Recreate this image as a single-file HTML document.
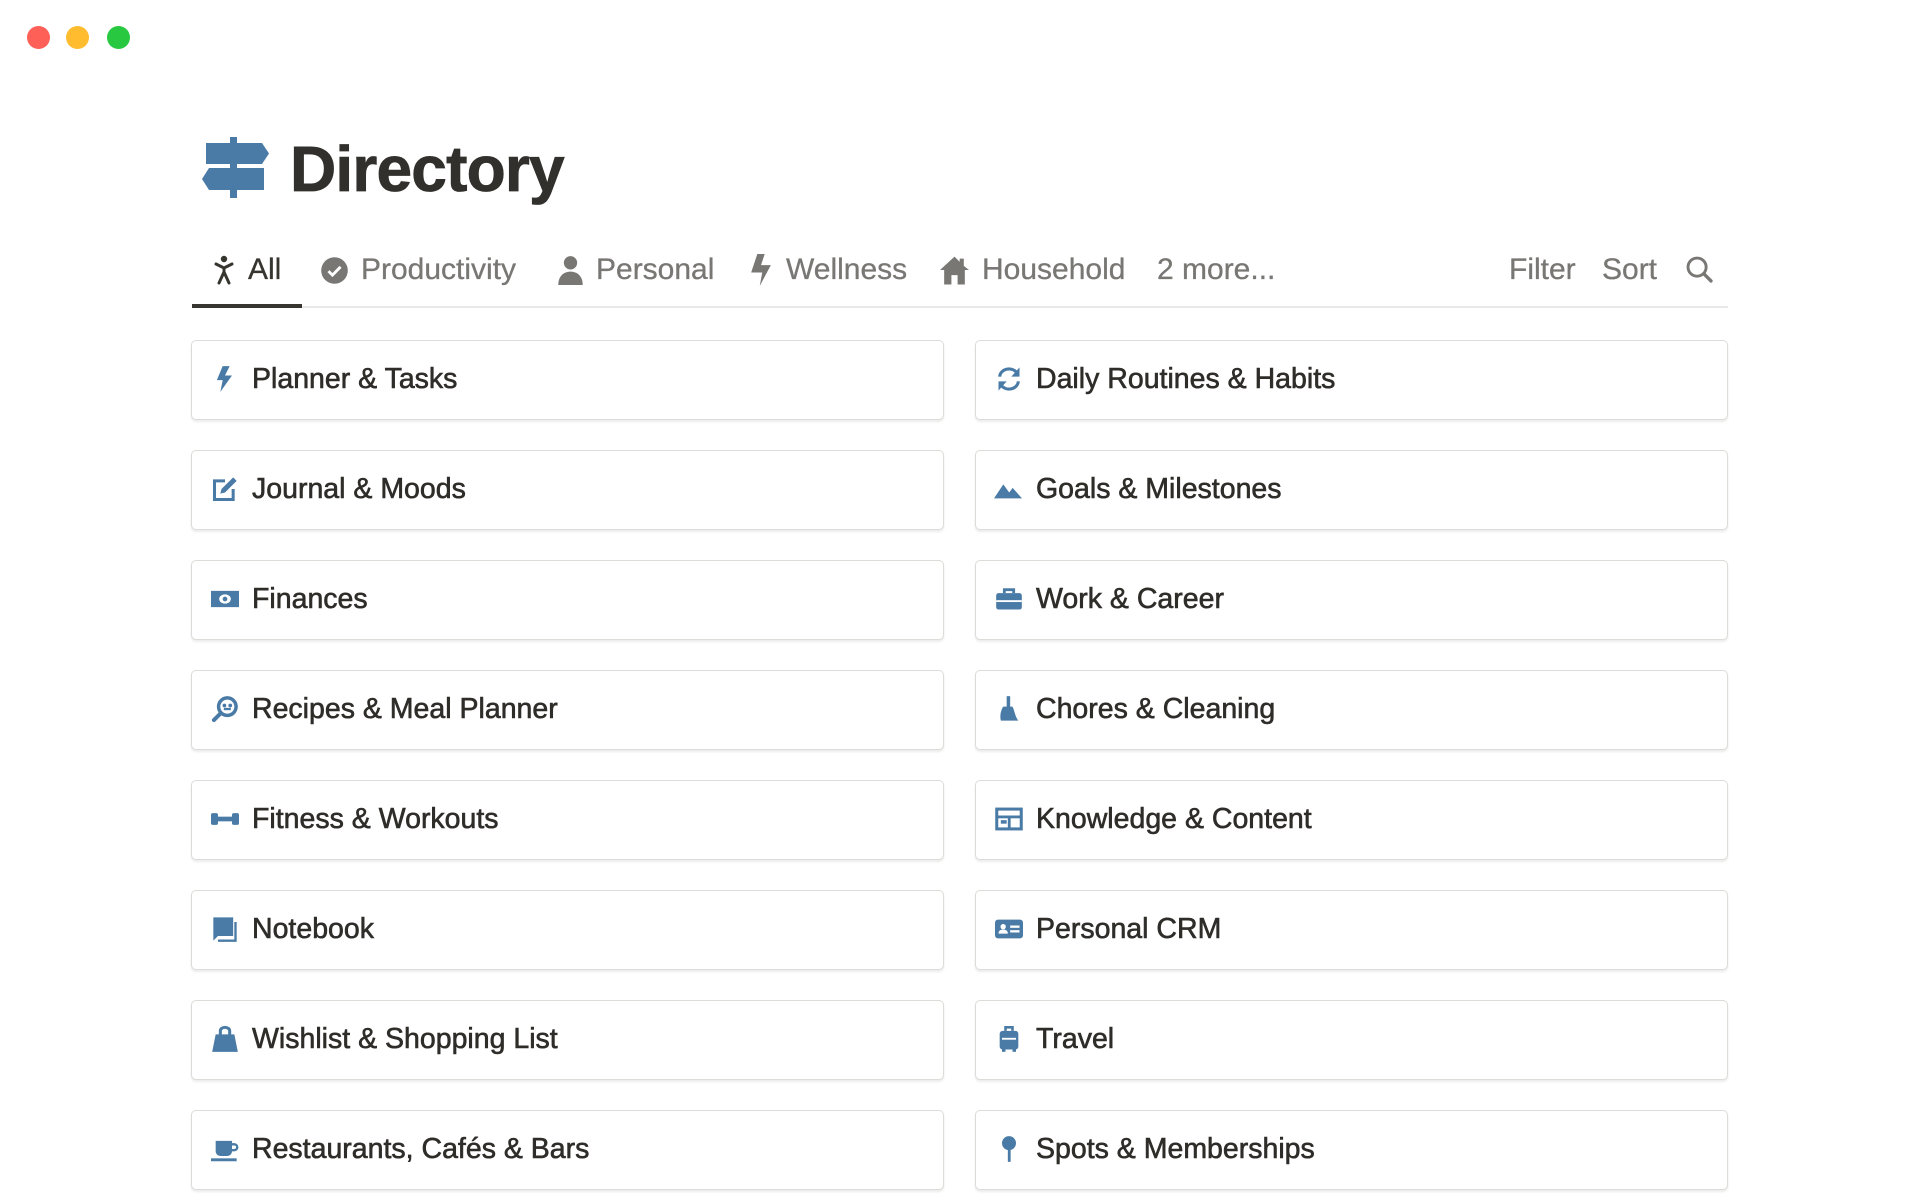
<!DOCTYPE html>
<html><head><meta charset="utf-8"><style>
*{margin:0;padding:0;box-sizing:border-box}
body{width:1920px;height:1200px;overflow:hidden;background:#fff;font-family:"Liberation Sans",sans-serif;position:relative;color:#37352f}
.tl{position:absolute;top:26px;width:23px;height:23px;border-radius:50%}
.title{position:absolute;left:290px;top:132px;font-size:64px;font-weight:bold;letter-spacing:-0.8px;color:#32302c;-webkit-text-stroke:0.8px #32302c}
.tab{position:absolute;top:250px;font-size:30px;color:#787774;display:flex;align-items:center;height:40px;-webkit-text-stroke:0.3px #787774}
.tab svg{margin-right:12px}
.line{position:absolute;left:192px;top:306px;width:1536px;height:2px;background:#e9e9e7}
.act{position:absolute;left:192px;top:304px;width:110px;height:4px;background:#37352f}
.card{position:absolute;width:753px;height:80px;border:1.5px solid #dedcd8;border-radius:5px;box-shadow:0 2px 2px rgba(0,0,0,0.08);display:flex;align-items:center;padding-left:19px;font-size:28.5px;color:#2f2d29;-webkit-text-stroke:0.6px #2f2d29;background:#fff;padding-bottom:2px}
.card svg{width:28px;height:28px;margin-right:13px;flex:none}
.ic{fill:#4a7ba6}
</style></head><body>
<div class="tl" style="left:27px;background:#fe5f57"></div>
<div class="tl" style="left:66px;background:#febc2e"></div>
<div class="tl" style="left:107px;background:#28c840"></div>

<svg style="position:absolute;left:200px;top:136px" width="72" height="64" viewBox="200 136 72 64">
<rect x="230" y="137" width="7" height="61" fill="#4a7ba6"/>
<polygon points="206,143 262,143 269,153.5 262,164 206,164" fill="#4a7ba6"/>
<polygon points="209,168 264,168 264,190 209,190 202,179" fill="#4a7ba6"/>
</svg>
<div class="title">Directory</div>

<div class="tab" style="left:212px;color:#37352f;-webkit-text-stroke:0.3px #37352f"><svg width="24" height="30" viewBox="0 0 24 30"><circle cx="12" cy="4" r="3.2" fill="#37352f"/><path d="M4 9l8 4 8-4M12 13v4M12 17l-5 11M12 17l5 11" stroke="#37352f" stroke-width="3" fill="none" stroke-linecap="round"/></svg>All</div>
<div class="tab" style="left:320px"><svg width="29" height="29" viewBox="0 0 24 24"><circle cx="12" cy="12" r="11" fill="#787774"/><path d="M7 12.5l3.3 3.3L17 9" stroke="#fff" stroke-width="2.4" fill="none"/></svg>Productivity</div>
<div class="tab" style="left:557px"><svg width="27" height="30" viewBox="0 0 24 27"><circle cx="12" cy="7" r="6" fill="#787774"/><path d="M1 27c0-8 5-12 11-12s11 4 11 12z" fill="#787774"/></svg>Personal</div>
<div class="tab" style="left:748px"><svg width="26" height="32" viewBox="0 0 20 26"><path d="M7 0h6l-3 9h8L9 26l2-11H2z" fill="#787774"/></svg>Wellness</div>
<div class="tab" style="left:939px"><svg width="31" height="30" viewBox="0 0 30 28"><path d="M15 1L1 14h4v14h7v-9h6v9h7V14h4L24 10V3h-4v3z" fill="#787774"/></svg>Household</div>
<div class="tab" style="left:1157px">2 more...</div>
<div class="tab" style="left:1509px">Filter</div>
<div class="tab" style="left:1602px">Sort</div>
<svg style="position:absolute;left:1685px;top:255px" width="29" height="29" viewBox="0 0 24 24"><circle cx="10" cy="10" r="7.5" stroke="#787774" stroke-width="2.4" fill="none"/><path d="M15.5 15.5l6 6" stroke="#787774" stroke-width="2.8" stroke-linecap="round"/></svg>
<div class="line"></div><div class="act"></div>

<div class="card" style="left:191px;top:340px"><svg viewBox="0 0 24 24"><path class="ic" d="M10 1h6l-4 8h6L8 23l2-10H5z"/></svg>Planner &amp; Tasks</div>
<div class="card" style="left:191px;top:450px"><svg viewBox="0 0 24 24"><path d="M12 5H3v16h16v-9" stroke="#4a7ba6" stroke-width="2.6" fill="none"/><path class="ic" d="M19 2l3 3-10 10-4 1 1-4z"/></svg>Journal &amp; Moods</div>
<div class="card" style="left:191px;top:560px"><svg viewBox="0 0 24 24"><path class="ic" fill-rule="evenodd" d="M0 5h24v14H0zM12 8a5 4 0 1 0 0.01 0zM12 10a2 2 0 1 1-0.01 0z"/></svg>Finances</div>
<div class="card" style="left:191px;top:670px"><svg viewBox="0 0 24 24"><circle cx="14" cy="10" r="7.5" stroke="#4a7ba6" stroke-width="3" fill="none"/><circle cx="11.5" cy="9" r="1.6" class="ic"/><circle cx="16.5" cy="9" r="1.6" class="ic"/><rect x="11" y="11" width="6" height="2" class="ic"/><path d="M8.5 15.5L2.5 21.5" stroke="#4a7ba6" stroke-width="3.4" stroke-linecap="round"/></svg>Recipes &amp; Meal Planner</div>
<div class="card" style="left:191px;top:780px"><svg viewBox="0 0 24 24"><rect x="0" y="7" width="6" height="10" rx="1.5" class="ic"/><rect x="18" y="7" width="6" height="10" rx="1.5" class="ic"/><rect x="5" y="10" width="14" height="4" class="ic"/></svg>Fitness &amp; Workouts</div>
<div class="card" style="left:191px;top:890px"><svg viewBox="0 0 24 24"><path class="ic" d="M2 2h17v16H6l-4 4z"/><path d="M21 6v16H6" stroke="#4a7ba6" stroke-width="2" fill="none"/></svg>Notebook</div>
<div class="card" style="left:191px;top:1000px"><svg viewBox="0 0 24 24"><path d="M8 9V5a4 3 0 0 1 8 0v4" stroke="#4a7ba6" stroke-width="2.6" fill="none"/><path class="ic" d="M4 8h16l3 15H1z"/></svg>Wishlist &amp; Shopping List</div>
<div class="card" style="left:191px;top:1110px"><svg viewBox="0 0 24 24"><path class="ic" d="M4 5h14v9a4 4 0 0 1-4 4H8a4 4 0 0 1-4-4z"/><path d="M18 8h2a2 2 0 0 1 0 5h-2" stroke="#4a7ba6" stroke-width="2" fill="none"/><rect x="0" y="20" width="22" height="2.5" class="ic"/></svg>Restaurants, Cafés &amp; Bars</div>

<div class="card" style="left:975px;top:340px"><svg viewBox="0 0 24 24"><path d="M4 10a8 7 0 0 1 15-3M20 14a8 7 0 0 1-15 3" stroke="#4a7ba6" stroke-width="2.6" fill="none"/><path class="ic" d="M21 2v8h-7zM3 22v-8h7z"/></svg>Daily Routines &amp; Habits</div>
<div class="card" style="left:975px;top:450px"><svg viewBox="0 0 24 24" style="width:34px;margin-left:-4px;margin-right:11px"><path class="ic" d="M0 20L8 8l5 7 3-4 8 9z"/></svg>Goals &amp; Milestones</div>
<div class="card" style="left:975px;top:560px"><svg viewBox="0 0 24 24"><path d="M8 7V4h8v3" stroke="#4a7ba6" stroke-width="2.4" fill="none"/><rect x="1" y="7" width="22" height="14" rx="2" class="ic"/><rect x="1" y="13" width="22" height="1.6" fill="#fff"/></svg>Work &amp; Career</div>
<div class="card" style="left:975px;top:670px"><svg viewBox="0 0 24 24"><rect x="10" y="1" width="3" height="10" class="ic"/><path class="ic" d="M7 10h8c2 4 2 8 5 12H5c-1-4 0-9 2-12z"/></svg>Chores &amp; Cleaning</div>
<div class="card" style="left:975px;top:780px"><svg viewBox="0 0 24 24"><rect x="1.5" y="3.5" width="21" height="17" stroke="#4a7ba6" stroke-width="2.6" fill="none"/><rect x="1.5" y="9" width="21" height="2.4" class="ic"/><rect x="11" y="9" width="2.4" height="11" class="ic"/><rect x="5" y="13" width="5" height="3" class="ic"/></svg>Knowledge &amp; Content</div>
<div class="card" style="left:975px;top:890px"><svg viewBox="0 0 24 24"><rect x="0" y="4" width="24" height="16" rx="2.5" class="ic"/><circle cx="7" cy="10" r="2.3" fill="#fff"/><path d="M3 16c0-3 2-3.5 4-3.5s4 .5 4 3.5z" fill="#fff"/><rect x="13" y="9" width="8" height="2" fill="#fff"/><rect x="13" y="13" width="8" height="2" fill="#fff"/></svg>Personal CRM</div>
<div class="card" style="left:975px;top:1000px"><svg viewBox="0 0 24 24"><path d="M9 5V2h6v3" stroke="#4a7ba6" stroke-width="2.2" fill="none"/><rect x="4" y="5" width="16" height="16" rx="2.5" class="ic"/><rect x="6" y="20" width="3" height="3" class="ic"/><rect x="15" y="20" width="3" height="3" class="ic"/><rect x="6" y="11" width="12" height="1.6" fill="#fff"/></svg>Travel</div>
<div class="card" style="left:975px;top:1110px"><svg viewBox="0 0 24 24"><circle cx="12" cy="7" r="6" class="ic"/><rect x="11" y="10" width="2.4" height="13" class="ic"/></svg>Spots &amp; Memberships</div>
</body></html>
